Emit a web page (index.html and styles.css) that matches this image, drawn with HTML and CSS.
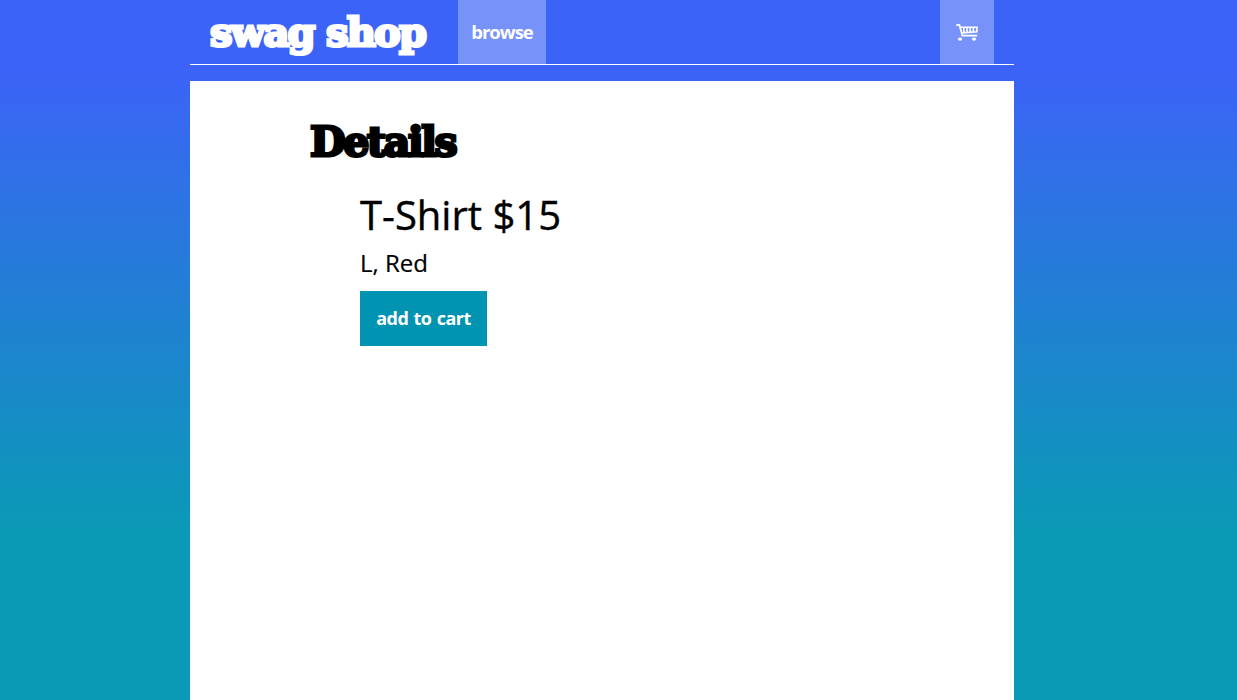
FILE: index.html
```html
<!DOCTYPE html>
<html lang="en">
<head>
<meta charset="utf-8">
<title>swag shop</title>
<link rel="stylesheet" href="styles.css">
</head>
<body>
<div class="page">
  <header class="header">
    <a class="logo">swag shop</a>
    <nav class="nav"><a class="browse"><span>browse</span></a></nav>
    <a class="cart" aria-label="cart">
      <svg width="22" height="17" viewBox="0 0 22 17" fill="none" stroke="currentColor">
        <path d="M.3 1h3.1l3 10.7h14.8" stroke-width="1.8"/>
        <path d="M4.2 3.2h16.7v4.6L6 8.9" stroke-width="1.6"/>
        <path d="M7.8 3v5.5M11 3v5.4M14.2 3v5.1M17.4 3v5" stroke-width="1.6"/>
        <ellipse cx="4" cy="15.1" rx="2.1" ry="1.7" fill="currentColor" stroke="none"/>
        <ellipse cx="18" cy="15.1" rx="2.1" ry="1.7" fill="currentColor" stroke="none"/>
      </svg>
    </a>
  </header>
  <main class="content">
    <h1 class="title">Details</h1>
    <section class="product">
      <h2 class="name">T-Shirt $15</h2>
      <p class="variant">L, Red</p>
      <button class="add"><span>add to cart</span></button>
    </section>
  </main>
</div>
</body>
</html>
```
FILE: styles.css
```css
* { box-sizing: border-box; }
body {
  margin: 0;
  height: 700px;
  overflow: hidden;
  font-family: "Open Sans", sans-serif;
  background: linear-gradient(#3c63f7 0, #3c63f7 70px, #247dd7 280px, #0a9ab5 535px);
}
.page {
  width: 824px;
  height: 700px;
  margin-left: 190px;
  display: flex;
  flex-direction: column;
}
.header {
  height: 65px;
  padding: 0 20px;
  border-bottom: 1px solid #fff;
  display: flex;
  color: #fff;
}
.logo {
  width: 248px;
  font: bold 40px/64px "DejaVu Serif", serif;
  letter-spacing: -1.75px;
  white-space: nowrap;
  -webkit-text-stroke: 3px currentColor;
}
.browse, .cart {
  height: 64px;
  display: flex;
  align-items: center;
  justify-content: center;
  background: #7792f9;
}
.browse {
  width: 88px;
  padding-bottom: 2px;
  font-size: 18.5px;
  font-weight: 700;
  letter-spacing: -1px;
}
.cart { width: 54px; margin-left: auto; }
.content {
  flex: 1;
  margin-top: 16px;
  padding: 29px 120px 0;
  background: #fff;
  color: #000;
}
.title {
  margin: 0;
  font: bold 41px/64px "DejaVu Serif", serif;
  letter-spacing: -2.3px;
  -webkit-text-stroke: 3px currentColor;
}
.product { padding: 11px 50px 0; }
.name {
  margin: 0;
  font-size: 40px;
  font-weight: 400;
  line-height: 59px;
  -webkit-text-stroke: 0.4px currentColor;
}
.variant {
  margin: 0;
  padding-top: 1px;
  font-size: 24px;
  line-height: 36px;
  -webkit-text-stroke: 0.2px currentColor;
}
.add {
  width: 127px;
  height: 55px;
  margin-top: 10px;
  padding: 0 0 2px;
  border: 0;
  background: #0093b2;
  color: #fff;
  font: 700 18px "Open Sans", sans-serif;
  letter-spacing: -0.5px;
  word-spacing: 1px;
}
```
